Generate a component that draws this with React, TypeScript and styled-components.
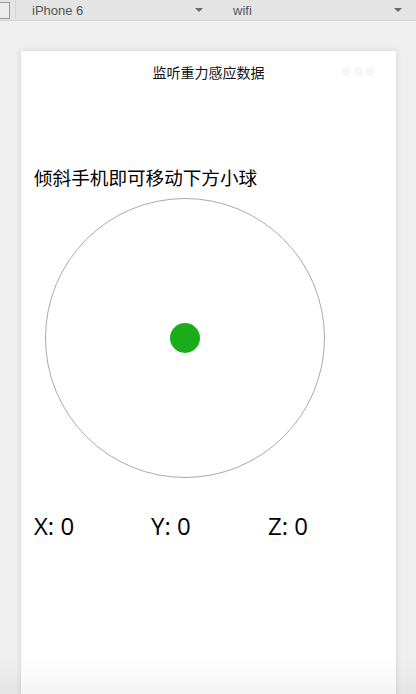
import React from "react";
import styled, { createGlobalStyle } from "styled-components";

const GlobalStyle = createGlobalStyle`
  html, body { margin: 0; padding: 0; background: #efefef; overflow: hidden; }
  body { font-family: "Liberation Sans", Arial, sans-serif; }
`;

const Page = styled.div`
  width: 416px;
  height: 694px;
  position: relative;
  overflow: hidden;
  background: #efefef;
`;

const Toolbar = styled.div`
  height: 20px;
  display: flex;
  align-items: center;
  background: #e4e4e4;
  border-bottom: 1px solid #d4d4d4;
  font-family: "Liberation Sans", Arial, sans-serif;
  font-size: 13px;
  color: #555;
`;

const DeviceToggle = styled.div`
  width: 16px;
  height: 20px;
  display: flex;
  align-items: center;
  border-right: 1px solid #d6d6d6;
  box-sizing: border-box;
`;

const DeviceBox = styled.div`
  width: 9px;
  height: 15px;
  border: 1px solid #9a9a9a;
  border-left: none;
  background: #ececec;
`;

const Select = styled.div<{ $width: number }>`
  width: ${(p) => p.$width}px;
  display: flex;
  align-items: center;
  justify-content: space-between;
  padding-left: 16px;
  box-sizing: border-box;
  padding-right: 14px;
`;

const Caret = styled.span`
  width: 0;
  height: 0;
  border-left: 4px solid transparent;
  border-right: 4px solid transparent;
  border-top: 4px solid #6a6a6a;
`;

const Stage = styled.div`
  padding: 30px 0 0 21px;
`;

const Phone = styled.div`
  width: 375px;
  height: 700px;
  background: #fff;
  box-shadow: 0 0 6px rgba(0, 0, 0, 0.12);
`;

const NavBar = styled.div`
  height: 42px;
  position: relative;
  display: flex;
  align-items: center;
  justify-content: center;
  font-family: "Noto Sans CJK SC", sans-serif;
  font-size: 14px;
  color: #111;
`;

const Capsule = styled.div`
  position: absolute;
  right: 21px;
  top: 16px;
  display: flex;
  gap: 3px;
`;

const Dot = styled.span`
  width: 9px;
  height: 9px;
  border-radius: 50%;
  background: #f7f7f7;
  box-shadow: 0 0 1px rgba(0, 0, 0, 0.05);
`;

const Content = styled.div`
  padding: 70px 0 0 13px;
`;

const Hint = styled.div`
  font-family: "Noto Sans CJK SC", sans-serif;
  font-size: 18.6px;
  line-height: 27px;
  color: #000;
`;

const Arena = styled.div`
  margin: 8px 0 0 11px;
  width: 280px;
  height: 280px;
  border: 1px solid #aaa;
  border-radius: 50%;
  box-sizing: border-box;
  display: flex;
  align-items: center;
  justify-content: center;
`;

const Ball = styled.div`
  width: 30px;
  height: 30px;
  border-radius: 50%;
  background: #1aad19;
`;

const Readouts = styled.div`
  margin-top: 31px;
  display: grid;
  grid-template-columns: repeat(3, 117px);
`;

const Readout = styled.div`
  font-family: "Open Sans", sans-serif;
  font-size: 24px;
  line-height: 34px;
  color: #000;
`;

const BottomFade = styled.div`
  position: absolute;
  left: 0;
  right: 0;
  bottom: 0;
  height: 36px;
  background: linear-gradient(to bottom, rgba(0, 0, 0, 0), rgba(0, 0, 0, 0.045));
  pointer-events: none;
`;

export default function App() {
  return (
    <>
      <GlobalStyle />
      <Page>
        <Toolbar>
          <DeviceToggle>
            <DeviceBox />
          </DeviceToggle>
          <Select $width={201}>
            <span>iPhone 6</span>
            <Caret />
          </Select>
          <Select $width={199}>
            <span>wifi</span>
            <Caret />
          </Select>
        </Toolbar>
        <Stage>
          <Phone>
            <NavBar>
              监听重力感应数据
              <Capsule>
                <Dot />
                <Dot />
                <Dot />
              </Capsule>
            </NavBar>
            <Content>
              <Hint>倾斜手机即可移动下方小球</Hint>
              <Arena>
                <Ball />
              </Arena>
              <Readouts>
                <Readout>X: 0</Readout>
                <Readout>Y: 0</Readout>
                <Readout>Z: 0</Readout>
              </Readouts>
            </Content>
          </Phone>
        </Stage>
        <BottomFade />
      </Page>
    </>
  );
}
